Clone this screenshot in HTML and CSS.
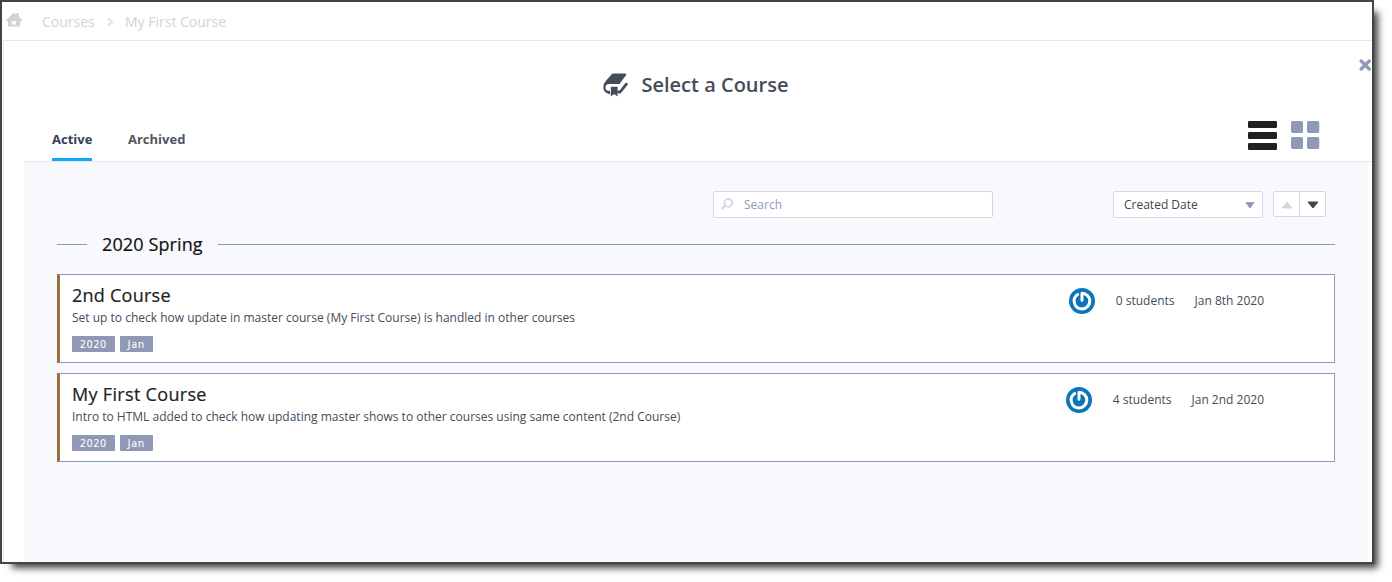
FILE: index.html
```html
<!DOCTYPE html>
<html lang="en">
<head>
<meta charset="utf-8">
<title>Select a Course</title>
<link rel="stylesheet" href="styles.css">
</head>
<body>
<svg width="0" height="0" class="defs">
  <symbol id="power" viewBox="0 0 26 26">
    <circle cx="13" cy="13" r="13" fill="#0b76bb"/>
    <path d="M9.2 7A7.5 7.5 0 0 0 13 20.9A7.5 7.5 0 0 0 13.4 6V12.6" transform="translate(.5 .8)" fill="none" stroke="#075687" stroke-width="3.2" stroke-linecap="round" opacity=".35"/>
    <path d="M8.7 6.6A7.8 7.8 0 0 0 13 20.9A7.8 7.8 0 0 0 13 5.3V12.2" fill="none" stroke="#fff" stroke-width="3" stroke-linecap="round" stroke-linejoin="round"/>
  </symbol>
</svg>
<div class="window">
  <nav class="crumbs">
    <svg class="home" width="16" height="15" viewBox="0 0 16 15"><path d="M0 8 8 .5l2.4 2.2V1h2.4v3.6L16 8v1h-1.8v4.2q0 1.3-1.3 1.3H3.2q-1.3 0-1.3-1.3V9H0zM5.7 9v3.6h4.5V9z" fill="#cfd3da" fill-rule="evenodd"/></svg>
    <span class="crumb first">Courses</span>
    <svg class="chev" width="7" height="8" viewBox="0 0 7 8"><path d="M1 .5 4.8 4 1 7.5" fill="none" stroke="#e0e3ec" stroke-width="2.3"/></svg>
    <span class="crumb second">My First Course</span>
  </nav>
  <div class="sheet">
    <header class="head">
      <svg width="25" height="24" viewBox="0 0 25 24"><path d="M8.7 1.2Q9.3.5 10.5.5H22q2 0 1 1.7L16.5 11H6.2Q3.2 11 2.5 13.4 1.9 16 4 17.4L7 18v3.2Q.5 20 .3 14.5.2 10.7 3.2 7.6z" fill="#454c59"/><path d="M7.8 13.8h6.8V23.5l-3.4-2.4-3.4 2.4z" fill="#454c59"/><path d="M23.3 11.2 17.2 19H15.5" fill="none" stroke="#454c59" stroke-width="2.8" stroke-linecap="round" stroke-linejoin="round"/></svg>
      <h1>Select a Course</h1>
    </header>
    <svg class="close" width="13" height="12" viewBox="0 0 13 12"><path d="M2.2 2 10.2 10M10.2 2l-8 8" stroke="#8f99b5" stroke-width="3.4" stroke-linecap="round"/></svg>
    <div class="tabs">
      <span class="tab on">Active</span>
      <span class="tab archived">Archived</span>
      <div class="views">
        <svg width="30" height="30" viewBox="0 0 30 30" fill="#202020"><rect x="0" y="0" width="29" height="7" rx="1.3"/><rect x="0" y="11" width="29" height="7" rx="1.3"/><rect x="0" y="22" width="29" height="7" rx="1.3"/></svg>
        <svg width="30" height="30" viewBox="0 0 30 30" fill="#8f99b5"><rect x="0" y="0" width="12" height="12" rx="1.8"/><rect x="16" y="0" width="12.3" height="12" rx="1.8"/><rect x="0" y="16" width="12" height="12" rx="1.8"/><rect x="16" y="16" width="12.3" height="12" rx="1.8"/></svg>
      </div>
    </div>
    <main class="panel">
      <div class="tools">
        <div class="search">
          <svg width="13" height="12" viewBox="0 0 13 12"><circle cx="7.3" cy="4.9" r="3.9" fill="none" stroke="#d3d8e5" stroke-width="1.8"/><path d="M4.2 7.7 1.4 10.3" stroke="#d3d8e5" stroke-width="2.3" stroke-linecap="round"/></svg>
          <span>Search</span>
        </div>
        <div class="select"><span>Created Date</span><svg width="10" height="7" viewBox="0 0 10 7"><path d="M1 .7h8L5 5.9z" fill="#8f99b5" stroke="#8f99b5" stroke-linejoin="round"/></svg></div>
        <div class="order">
          <span class="up"><svg width="12" height="8" viewBox="0 0 12 8"><path d="M1 7h10L6 1z" fill="#d3d8e5" stroke="#d3d8e5" stroke-linejoin="round"/></svg></span>
          <span class="down"><svg width="12" height="8" viewBox="0 0 12 8"><path d="M1 1h10L6 7z" fill="#40464f" stroke="#40464f" stroke-linejoin="round"/></svg></span>
        </div>
      </div>
      <div class="term"><h2>2020 Spring</h2></div>
      <article class="card">
        <div class="info">
          <h3 class="c1">2nd Course</h3>
          <p class="d1">Set up to check how update in master course (My First Course) is handled in other courses</p>
          <div class="tags"><span class="year">2020</span><span class="month">Jan</span></div>
        </div>
        <div class="meta"><svg width="26" height="26"><use href="#power"/></svg><span class="count">0 students</span><span class="date">Jan 8th 2020</span></div>
      </article>
      <article class="card">
        <div class="info">
          <h3 class="c2">My First Course</h3>
          <p class="d2">Intro to HTML added to check how updating master shows to other courses using same content (2nd Course)</p>
          <div class="tags"><span class="year">2020</span><span class="month">Jan</span></div>
        </div>
        <div class="meta"><svg width="26" height="26"><use href="#power"/></svg><span class="count">4 students</span><span class="date">Jan 2nd 2020</span></div>
      </article>
    </main>
  </div>
</div>
</body>
</html>
```
FILE: styles.css
```css
* { box-sizing: border-box; }
body { margin: 0; height: 582px; overflow: hidden; background: #fff; font-family: "Open Sans", "Noto Sans", sans-serif; color: #454c59; white-space: nowrap; }
h1, h2, h3, p { margin: 0; }
svg { display: block; flex: none; }
.defs { position: absolute; }
.window { width: 1374px; height: 564px; border: 2px solid #444; background: #fff; box-shadow: 8px 8px 7px -4px rgba(0, 0, 0, .75); display: flex; flex-direction: column; }
.crumbs { height: 38px; display: flex; align-items: center; padding-left: 4px; flex: none; }
.home { margin-top: -3px; }
.crumb { font-size: 14px; line-height: 20px; color: #d0d3d9; margin-top: 2px; }
.first { margin-left: 20px; width: 53px; }
.chev { margin: 2px 11px 0 12px; }
.sheet { position: relative; flex: 1; margin-left: 1px; border-top: 1px solid #e5e7ec; border-left: 1px solid #ebebf0; padding-left: 20px; display: flex; flex-direction: column; min-height: 0; }
.head { height: 80px; display: flex; padding: 32px 0 0 579px; gap: 13.5px; }
.head h1 { font-size: 20px; font-weight: 600; line-height: 26px; margin-top: -1px; }
.close { position: absolute; right: 0; top: 18px; }
.tabs { height: 41px; border-bottom: 1px solid #e5e7ec; display: flex; padding-left: 28px; flex: none; }
.tab { font-size: 13px; font-weight: 700; line-height: 18px; padding-top: 9px; height: 40px; color: #50565f; }
.on { width: 40px; color: #33405a; border-bottom: 3px solid #12a5ff; margin-right: 36px; }
.views { display: flex; gap: 13px; margin: 0 51px 0 auto; }
.panel { flex: 1; margin-right: 4px; background: #f8f9fd; padding: 29px 33px 0; }
.tools { display: flex; padding-left: 656px; font-size: 12px; }
.search { width: 280px; height: 27px; border: 1px solid #d3d8e5; border-radius: 2px; background: #fff; display: flex; align-items: center; padding-left: 7px; gap: 10px; color: #8f99b5; }
.search svg { margin-top: -2px; }
.select { width: 150px; height: 27px; margin-left: 120px; border: 1px solid #d3d8e5; border-radius: 2px; background: #fff; display: flex; align-items: center; justify-content: space-between; padding: 0 7px 0 10px; color: #40464f; }
.select svg { margin-top: 1px; }
.order { width: 53px; height: 26px; margin-left: 10px; border: 1px solid #d3d8e5; border-radius: 2px; background: #fff; display: flex; }
.order span { flex: 1; display: flex; align-items: center; justify-content: center; padding-top: 1px; }
.up { border-right: 1px solid #d3d8e5; }
.term { display: flex; align-items: center; height: 26px; margin-top: 13px; }
.term::before, .term::after { content: ""; height: 1px; background: #8f99b5; }
.term::before { width: 30px; margin-right: 15px; }
.term::after { flex: 1; }
.term h2 { width: 116px; font-size: 18px; font-weight: 500; line-height: 26px; letter-spacing: .12px; color: #111; -webkit-text-stroke: .2px #111; }
.card { height: 89px; margin-top: 17px; border: 1px solid #8f99b5; border-left: 3px solid #996f35; background: #fff; display: flex; justify-content: space-between; padding: 8px 70px 0 12px; }
.card + .card { margin-top: 10px; }
.card h3 { font-size: 18px; font-weight: 500; line-height: 24px; letter-spacing: .25px; color: #222; -webkit-text-stroke: .2px #222; }
.card .c2 { letter-spacing: .32px; }
.card p { font-size: 12px; line-height: 18px; margin-top: 2px; }
.tags { display: flex; gap: 5px; margin-top: 9px; color: #fff; font-size: 10px; font-weight: 500; line-height: 17px; letter-spacing: 1px; text-align: center; -webkit-text-stroke: .15px #fff; }
.tags span { height: 16px; background: #8f99b5; border-radius: 1px; }
.year { width: 43px; }
.month { width: 33px; }
.meta { display: flex; align-items: center; height: 26px; margin-top: 5px; font-size: 12px; line-height: 16px; }
.count { margin: 0 20px 0 21px; }
```
